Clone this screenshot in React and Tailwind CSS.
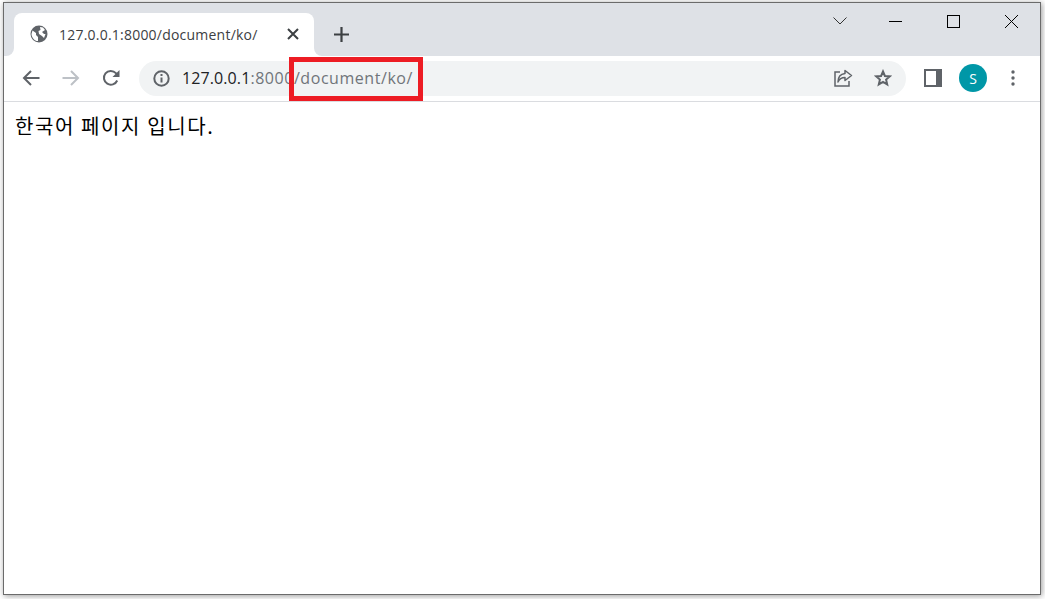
import React from "react";

function Globe() {
    return (
        <svg width="18" height="18" viewBox="0 0 18 18">
            <circle cx="9" cy="9" r="8.5" fill="#5f6368" />
            <path d="M2.5 5.5 L6 8 L6 10 L8 12 L8 16 L6.5 16 C4 15 1.5 12 1.5 9 Z" fill="#ffffff" />
            <path d="M10 2 L13 2.5 L15 5 L12 7 L14 9 L15.5 9 L14 13 L12 11 L9 9 L8.5 6 L10.5 5 Z" fill="#ffffff" />
        </svg>
    );
}

function Arrow({ color, flip }) {
    return (
        <svg width="18" height="16" viewBox="0 0 18 16" fill="none" stroke={color} strokeWidth="2" className={flip ? "-scale-x-100" : ""}>
            <path d="M17.5 8 H2" />
            <path d="M9 1 L2 8 L9 15" />
        </svg>
    );
}

function ReloadIcon() {
    return (
        <svg width="18" height="18" viewBox="0 0 18 18" fill="none">
            <path d="M15.2 11.5 A6.9 6.9 0 1 1 13.9 4.1 L15.5 5.8" stroke="#5f6368" strokeWidth="2" />
            <path d="M17.5 1 V8 H10.5 Z" fill="#5f6368" />
        </svg>
    );
}

function InfoIcon() {
    return (
        <svg width="17" height="17" viewBox="0 0 17 17" fill="none">
            <circle cx="8.5" cy="8.5" r="7.2" stroke="#5f6368" strokeWidth="2" />
            <path d="M8.5 7.5 V12.5" stroke="#5f6368" strokeWidth="2" />
            <path d="M8.5 4 V6" stroke="#5f6368" strokeWidth="2" />
        </svg>
    );
}

function ShareIcon() {
    return (
        <svg width="20" height="20" viewBox="0 0 20 20" fill="none" stroke="#5f6368" strokeWidth="1.5">
            <path d="M7 4 H2 V18 H16 V13" />
            <path d="M12 2.5 L18.5 7.5 L12 12.5 V9.5 C9 9.5 6.5 10.5 5 14 C5 9 8 6 12 5.5 Z" strokeLinejoin="round" />
        </svg>
    );
}

function StarIcon() {
    return (
        <svg width="18" height="18" viewBox="0 0 18 18" fill="none" stroke="#5f6368" strokeWidth="2">
            <path d="M9 2.5 L10.9 7 L15.8 7.4 L12.1 10.6 L13.2 15.4 L9 12.9 L4.8 15.4 L5.9 10.6 L2.2 7.4 L7.1 7 Z" />
        </svg>
    );
}

function SidePanelIcon() {
    return (
        <svg width="18" height="18" viewBox="0 0 18 18">
            <path fillRule="evenodd" d="M0 0 H18 V18 H0 Z M2 2 V16 H12 V2 Z" fill="#5f6368" />
        </svg>
    );
}

function TabClose() {
    return (
        <svg width="12" height="12" viewBox="0 0 12 12" stroke="#3c4043" strokeWidth="2">
            <path d="M1 1 L11 11 M11 1 L1 11" />
        </svg>
    );
}

function PlusIcon() {
    return (
        <svg width="15" height="15" viewBox="0 0 15 15" stroke="#3c4043" strokeWidth="2.2">
            <path d="M7.5 0 V15 M0 7.5 H15" />
        </svg>
    );
}

function WindowButton({ children }) {
    return <div className="flex h-[36px] w-[58px] items-center justify-center">{children}</div>;
}

export default function App() {
    return (
        <div className="h-[599px] w-[1045px] overflow-hidden bg-white p-[2px_4px_4px_3px]" style={{ fontFamily: '"Open Sans", "Noto Sans CJK KR", sans-serif' }}>
            <div className="relative flex h-full flex-col border border-[#6b6b6b] bg-white shadow-[1px_1px_6px_rgba(0,0,0,0.4)]">
                {/* Tab strip */}
                <div className="flex h-[53px] shrink-0 items-end bg-[#dee1e6] pl-[10px]">
                    <div className="relative flex h-[43px] w-[300px] items-start rounded-t-lg bg-white pl-[16px] pr-[15px] pt-[12px]">
                        <div className="absolute bottom-0 -left-2 h-2 w-2 bg-white">
                            <div className="h-full w-full rounded-br-lg bg-[#dee1e6]"></div>
                        </div>
                        <div className="absolute bottom-0 -right-2 h-2 w-2 bg-white">
                            <div className="h-full w-full rounded-bl-lg bg-[#dee1e6]"></div>
                        </div>
                        <Globe />
                        <span className="ml-[11px] text-[14px] leading-[19px] tracking-[0.22px] text-[#3c4043]">127.0.0.1:8000/document/ko/</span>
                        <div className="ml-auto mt-[3px]"><TabClose /></div>
                    </div>
                    <div className="mb-[14px] ml-[20px]"><PlusIcon /></div>
                    <div className="ml-auto flex self-start text-black">
                        <WindowButton>
                            <svg width="14" height="8" viewBox="0 0 14 8" fill="none" stroke="#333" className="ml-[6px]"><path d="M0.5 0.5 L7 7 L13.5 0.5" /></svg>
                        </WindowButton>
                        <WindowButton>
                            <svg width="13" height="1" viewBox="0 0 13 1" stroke="#000"><path d="M0 0.5 H13" /></svg>
                        </WindowButton>
                        <WindowButton>
                            <svg width="13" height="13" viewBox="0 0 13 13" fill="none" stroke="#000"><rect x="0.5" y="0.5" width="12" height="12" /></svg>
                        </WindowButton>
                        <WindowButton>
                            <svg width="13" height="13" viewBox="0 0 13 13" stroke="#000"><path d="M0 0 L13 13 M13 0 L0 13" /></svg>
                        </WindowButton>
                    </div>
                </div>

                {/* Toolbar */}
                <div className="flex h-[46px] shrink-0 items-center border-b border-[#dadce0] bg-white pb-[1px]">
                    <div className="ml-[18px]"><Arrow color="#5f6368" /></div>
                    <div className="ml-[22px]"><Arrow color="#bdc1c6" flip /></div>
                    <div className="ml-[22px]"><ReloadIcon /></div>
                    <div className="ml-[19px] flex h-[35px] w-[767px] items-center rounded-full bg-[#f1f3f4] pl-[14px] pr-[14px]">
                        <InfoIcon />
                        <span className="ml-[12px] text-[16px] leading-[35px] tracking-[0.1px] text-[#202124]">127.0.0.1<span className="tracking-[0.55px] text-[#70757a]">:8000/document/ko/</span></span>
                        <div className="ml-auto flex items-center gap-[21px]">
                            <ShareIcon />
                            <StarIcon />
                        </div>
                    </div>
                    <div className="ml-[18px]"><SidePanelIcon /></div>
                    <div className="ml-[17px] flex h-7 w-7 items-center justify-center rounded-full bg-[#0097a7] text-[14px] text-white">S</div>
                    <svg width="4" height="16" viewBox="0 0 4 16" className="ml-[24px]" fill="#5f6368">
                        <circle cx="2" cy="2" r="1.7" />
                        <circle cx="2" cy="8" r="1.7" />
                        <circle cx="2" cy="14" r="1.7" />
                    </svg>
                </div>

                {/* Page */}
                <div className="flex-1 bg-white pl-[11px] pt-[12px]">
                    <p className="text-[20px] leading-[24px] tracking-[1.6px] text-black" style={{ fontFamily: '"Noto Sans CJK KR", sans-serif' }}>한국어 페이지 입니다.</p>
                </div>

                {/* Red highlight box over the url */}
                <div className="absolute left-[285px] top-[54px] h-[44px] w-[134px] border-[5px] border-[#ed1c24]"></div>
            </div>
        </div>
    );
}
